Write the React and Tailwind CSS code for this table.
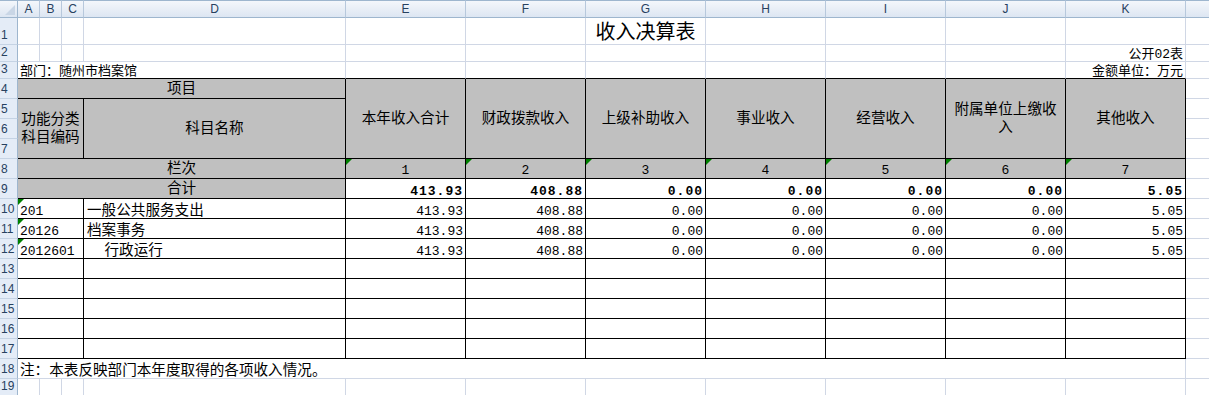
import React from "react";

// fonts
const SHEET = "font-['Liberation_Mono','Noto_Sans_CJK_SC',monospace] text-black";
const HDR = "font-['Liberation_Sans',Arial,sans-serif] text-[#27415f]";

// borders
const GRID = "border-r border-b border-r-[#d0d7e5] border-b-[#d0d7e5]";
const BOX = "border-r border-b border-r-black border-b-black";
const GRID_R_BLACK_B = "border-r border-b border-r-[#d0d7e5] border-b-black";

const letters = ["A", "B", "C", "D", "E", "F", "G", "H", "I", "J", "K", ""];

const heads = [
  ["本年收入合计"],
  ["财政拨款收入"],
  ["上级补助收入"],
  ["事业收入"],
  ["经营收入"],
  ["附属单位上缴收", "入"],
  ["其他收入"],
];

const total = ["413.93", "408.88", "0.00", "0.00", "0.00", "0.00", "5.05"];

const rows = [
  { code: "201", name: "一般公共服务支出", vals: total },
  { code: "20126", name: "档案事务", vals: total },
  { code: "2012601", name: "  行政运行", vals: total },
];

function Flag() {
  return (
    <svg className="absolute top-0 left-0" width="6" height="6" viewBox="0 0 6 6">
      <polygon points="0,0 6,0 0,6" fill="#008000" />
    </svg>
  );
}

function RowNum({ n }) {
  return (
    <div
      className={`${HDR} bg-[#e4ecf7] border-r border-b border-r-[#9eb6ce] border-b-[#c5d3e4] text-[12px] leading-none flex items-end pl-[1px] pb-[3px]`}
    >
      {n}
    </div>
  );
}

function Blank({ cls = GRID }) {
  return <div className={cls} />;
}

export default function App() {
  return (
    <div className={`${SHEET} w-[1209px] h-[395px] overflow-hidden bg-white`}>
      <div className="grid grid-cols-[18px_22px_22px_22px_262px_120px_120px_120px_120px_120px_120px_120px_1fr] grid-rows-[18px_27px_17px_17px_20px_20px_20px_20px_20px_20px_20px_20px_20px_20px_20px_20px_20px_20px_20px_17px]">
        {/* column headers */}
        <div className="relative bg-gradient-to-b from-[#f4f7fb] to-[#dde6f2] border-t border-r border-b border-t-[#9eb6ce] border-r-[#9eb6ce] border-b-[#9eb6ce]">
          <svg className="absolute right-[2px] bottom-[2px]" width="10" height="10" viewBox="0 0 10 10">
            <polygon points="10,0 10,10 0,10" fill="#c9d6e6" />
          </svg>
        </div>
        {letters.map((l, i) => (
          <div
            key={i}
            className={`${HDR} bg-gradient-to-b from-[#f4f7fb] to-[#dde6f2] border-t border-b border-t-[#9eb6ce] border-b-[#9eb6ce] ${
              l ? "border-r border-r-[#b7c8dc]" : ""
            } text-[12px] leading-none flex items-end justify-center pb-[2px]`}
          >
            {l}
          </div>
        ))}

        {/* row 1 */}
        <RowNum n={1} />
        <Blank />
        <Blank />
        <Blank />
        <Blank />
        <Blank />
        <Blank />
        <div className={`${GRID} flex items-end justify-center text-[20px] leading-[20px]`}>收入决算表</div>
        <Blank />
        <Blank />
        <Blank />
        <Blank />
        <Blank cls="border-b border-b-[#d0d7e5]" />

        {/* row 2 */}
        <RowNum n={2} />
        {Array.from({ length: 10 }).map((_, i) => (
          <Blank key={i} />
        ))}
        <div className={`${GRID} flex items-end justify-end pr-[2px] text-[13px] leading-[13px]`}>公开02表</div>
        <Blank cls="border-b border-b-[#d0d7e5]" />

        {/* row 3 */}
        <RowNum n={3} />
        <div className={`${GRID_R_BLACK_B} col-span-4 flex items-end pl-[2px] text-[13px] leading-[13px]`}>
          部门：随州市档案馆
        </div>
        {Array.from({ length: 6 }).map((_, i) => (
          <Blank key={i} cls={GRID_R_BLACK_B} />
        ))}
        <div className={`${GRID_R_BLACK_B} flex items-end justify-end pr-[2px] text-[13px] leading-[13px]`}>
          金额单位：万元
        </div>
        <Blank cls="border-b border-b-[#d0d7e5]" />

        {/* row 4 */}
        <RowNum n={4} />
        <div className={`${BOX} col-span-4 bg-[#c0c0c0] flex items-center justify-center text-[14.6px] leading-[18px]`}>
          项目
        </div>
        {heads.map((h, i) => (
          <div
            key={i}
            className={`${BOX} row-span-4 bg-[#c0c0c0] flex flex-col items-center justify-center text-center text-[14.6px] leading-[18px]`}
          >
            {h.map((t, j) => (
              <span key={j}>{t}</span>
            ))}
          </div>
        ))}
        <Blank cls="border-b border-b-[#d0d7e5]" />

        {/* row 5-7 */}
        <RowNum n={5} />
        <div
          className={`${BOX} col-span-3 row-span-3 bg-[#c0c0c0] flex flex-col items-center justify-center text-[14.6px] leading-[18px]`}
        >
          <span>功能分类</span>
          <span>科目编码</span>
        </div>
        <div className={`${BOX} row-span-3 bg-[#c0c0c0] flex items-center justify-center text-[14.6px] leading-[18px]`}>
          科目名称
        </div>
        <Blank cls="border-b border-b-[#d0d7e5]" />
        <RowNum n={6} />
        <Blank cls="border-b border-b-[#d0d7e5]" />
        <RowNum n={7} />
        <Blank cls="border-b border-b-[#d0d7e5]" />

        {/* row 8 */}
        <RowNum n={8} />
        <div className={`${BOX} col-span-4 bg-[#c0c0c0] flex items-center justify-center text-[14.6px] leading-[18px]`}>
          栏次
        </div>
        {[1, 2, 3, 4, 5, 6, 7].map((n) => (
          <div key={n} className={`${BOX} relative bg-[#c0c0c0] flex items-end justify-center pb-[1px] text-[13px] leading-[12px]`}>
            <Flag />
            {n}
          </div>
        ))}
        <Blank cls="border-b border-b-[#d0d7e5]" />

        {/* row 9 */}
        <RowNum n={9} />
        <div className={`${BOX} col-span-4 bg-[#c0c0c0] flex items-center justify-center text-[14.6px] leading-[18px]`}>
          合计
        </div>
        {total.map((v, i) => (
          <div
            key={i}
            className={`${BOX} flex items-end justify-end pr-[2px] text-[13px] leading-[12px] font-bold tracking-[1px]`}
          >
            {v}
          </div>
        ))}
        <Blank cls="border-b border-b-[#d0d7e5]" />

        {/* data rows */}
        {rows.map((r, k) => (
          <React.Fragment key={r.code}>
            <RowNum n={10 + k} />
            <div className={`${BOX} col-span-3 relative flex items-end pl-[2px] text-[13px] leading-[12px] whitespace-nowrap`}>
              <Flag />
              {r.code}
            </div>
            <div className={`${BOX} flex items-end pl-[3px] text-[14.6px] leading-[14px] whitespace-pre`}>
              {r.name}
            </div>
            {r.vals.map((v, i) => (
              <div key={i} className={`${BOX} flex items-end justify-end pr-[2px] text-[13px] leading-[12px]`}>
                {v}
              </div>
            ))}
            <Blank cls="border-b border-b-[#d0d7e5]" />
          </React.Fragment>
        ))}

        {/* empty rows */}
        {[13, 14, 15, 16, 17].map((n) => (
          <React.Fragment key={n}>
            <RowNum n={n} />
            <div className={`${BOX} col-span-3`} />
            <Blank cls={BOX} />
            {Array.from({ length: 7 }).map((_, i) => (
              <Blank key={i} cls={BOX} />
            ))}
            <Blank cls="border-b border-b-[#d0d7e5]" />
          </React.Fragment>
        ))}

        {/* row 18 note */}
        <RowNum n={18} />
        <div className={`${GRID} col-span-11 flex items-end pl-[2px] text-[14.6px] leading-[14px]`}>
          注：本表反映部门本年度取得的各项收入情况。
        </div>
        <Blank cls="border-b border-b-[#d0d7e5]" />

        {/* row 19 */}
        <RowNum n={19} />
        {Array.from({ length: 11 }).map((_, i) => (
          <Blank key={i} />
        ))}
        <Blank cls="border-b border-b-[#d0d7e5]" />
      </div>
    </div>
  );
}
